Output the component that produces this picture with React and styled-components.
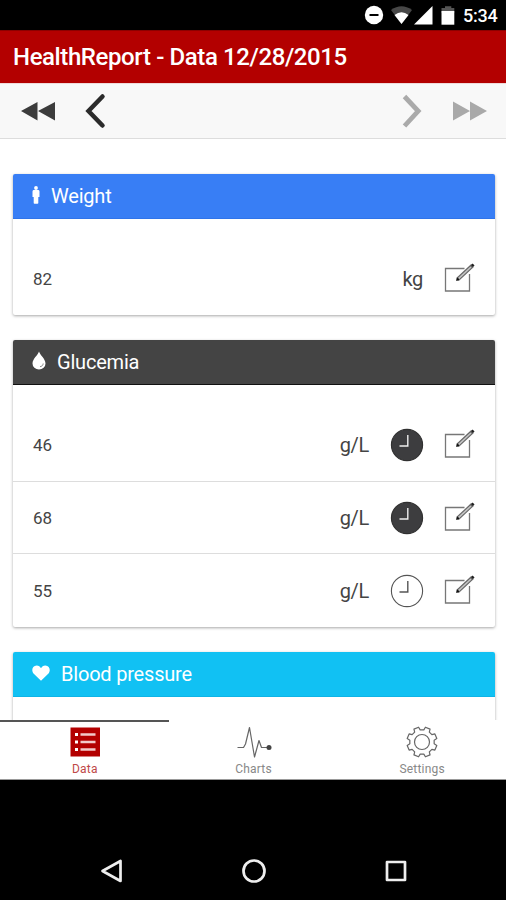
import React from 'react'
import styled, { createGlobalStyle } from 'styled-components';

const cards = [
    {
        title: 'Weight', icon: 'person', color: '#387ef5', edge: '#2f74ea', gap: 11,
        rows: [{ value: '82', unit: 'kg' }],
    },
    {
        title: 'Glucemia', icon: 'drop', color: '#444', edge: '#111', gap: 11,
        rows: [
            { value: '46', unit: 'g/L', clock: 'full' },
            { value: '68', unit: 'g/L', clock: 'full' },
            { value: '55', unit: 'g/L', clock: 'outline' },
        ],
    },
    {
        title: 'Blood pressure', icon: 'heart', color: '#11c1f3', edge: '#0eb4e6', gap: 11,
        rows: [{ value: '', unit: '' }],
    },
];

// outline of a cog with eight rounded teeth
const gearPath = () => {
    const points = [];
    for (let i = 0; i < 8; i++) {
        const mid = 22.5 + i * 45;
        [[-14, 12.3], [-9.5, 15.2], [9.5, 15.2], [14, 12.3]].forEach(([a, r]) => {
            const t = ((mid + a) * Math.PI) / 180;
            points.push(`${(16 + r * Math.cos(t)).toFixed(2)} ${(16 + r * Math.sin(t)).toFixed(2)}`);
        });
    }
    return `M${points.join('L')}Z`;
};

function EditIcon() {
    return (
        <svg width="32" height="32" viewBox="0 0 32 32" fill="none">
            <path d="M20.5 5.500H1.500V28H25.500V11" stroke="#777" strokeWidth="1.300" />
            <path d="M13.500 16.500L28.500 2.500" stroke="#666" strokeWidth="3.800" />
            <path d="M14.500 15.600L27 4" stroke="#c4c4c4" strokeWidth="1.600" />
            <path d="M12.600 17.400L13.400 15L15 16.600Z" fill="#111" stroke="#111" />
            <path d="M28 3L29.600 1.500" stroke="#222" strokeWidth="2.800" />
        </svg>
    )
}

function ClockIcon({ full }) {
    return (
        <svg width="34" height="34" viewBox="0 0 34 34" fill="none">
            <circle cx="17" cy="17" r="15.6" fill={full ? '#3d3d3f' : 'none'} stroke={full ? '#303030' : '#555'} strokeWidth="1.1" />
            <path d="M17.8 7V18H9.5" stroke={full ? '#eee' : '#555'} strokeWidth="1.4" />
        </svg>
    )
}

function TitleIcon({ name }) {
    if (name === 'person') {
        return (
            <svg width="8" height="18" viewBox="0 0 8 18" fill="#fff">
                <circle cx="4" cy="2" r="1.9" />
                <path d="M1.500 4H6.500Q7.500 4 7.500 5.500V11H6.300V17Q6.300 17.800 5.500 17.800H2.500Q1.700 17.800 1.700 17V11H0.500V5.500Q0.500 4 1.500 4Z" />
            </svg>
        )
    }
    if (name === 'drop') {
        return (
            <svg width="14" height="19" viewBox="0 0 14 19">
                <path d="M7 0.500C6 4 0.500 8 0.500 12.400A6.500 6.200 0 0 0 13.500 12.400C13.500 8 8 4 7 0.500Z" fill="#fff" />
                <path d="M11.200 12.500C11 14.400 9.800 15.500 8 15.700" stroke="#888" fill="none" />
            </svg>
        )
    }
    return (
        <svg width="18" height="16" viewBox="0 0 18 16" fill="#fff">
            <path d="M9 15.700L1.500 8.500C-0.700 6-0.100 0.600 4.700 0.500C6.700 0.500 8.200 1.700 9 3.200C9.800 1.700 11.300 0.500 13.300 0.500C18.100 0.600 18.700 6 16.500 8.500Z" />
        </svg>
    )
}

function StatusBar() {
    return (
        <Status>
            <svg width="92" height="22" viewBox="0 0 92 22">
                <circle cx="10" cy="11" r="9.200" fill="#fff" />
                <path d="M5.500 11H14.500" stroke="#000" strokeWidth="2" />
                <path d="M27 6Q37.500-1.500 48 6L37.500 20Z" fill="#474747" />
                <path d="M30.500 11Q37.500 5.600 44.500 11L37.500 20Z" fill="#fff" />
                <path d="M68.500 2V20.500H50Z" fill="#fff" />
                <path d="M77.500 4H81V2.300H87.300V4H90.300V9H77.500Z" fill="#555" />
                <path d="M77.500 7H90.300V20.700H77.500Z" fill="#fff" />
            </svg>
            <Time>5:34</Time>
        </Status>
    )
}

function App() {
    return (
        <Phone>
            <GlobalStyle />
            <StatusBar />
            <Header>
                <h1>HealthReport - Data 12/28/2015</h1>
            </Header>
            <Toolbar>
                <ToolbarSide>
                    <svg width="36" height="36" viewBox="0 0 36 36" fill="#3c3c3c">
                        <path d="M1 18L17.500 9V27.500ZM18 18L35 9V27.500Z" />
                    </svg>
                    <svg width="24" height="36" viewBox="0 0 24 36" fill="none">
                        <path d="M18.500 3.500L4.500 18L18.500 32.500" stroke="#2b2b2b" strokeWidth="4.500" strokeLinecap="round" />
                    </svg>
                </ToolbarSide>
                <ToolbarSide>
                    <svg width="24" height="36" viewBox="0 0 24 36" fill="none">
                        <path d="M4.500 3.500L18.200 18L4.500 33" stroke="#aaa" strokeWidth="4.800" />
                    </svg>
                    <svg width="36" height="36" viewBox="0 0 36 36" fill="#a9a9a9">
                        <path d="M1 8.500L18 18L1 27.500ZM18 8.500L35 18L18 27.500Z" />
                    </svg>
                </ToolbarSide>
            </Toolbar>
            <Content>
                {cards.map((card) => (
                    <Card key={card.title}>
                        <CardTitle $color={card.color} $edge={card.edge} $gap={card.gap}>
                            <TitleIcon name={card.icon} />
                            <h2>{card.title}</h2>
                        </CardTitle>
                        {card.rows.map((row, i) => (
                            <Row key={i}>
                                <Value>{row.value}</Value>
                                <Unit>{row.unit}</Unit>
                                {row.clock && <ClockIcon full={row.clock === 'full'} />}
                                <EditIcon />
                            </Row>
                        ))}
                    </Card>
                ))}
            </Content>
            <Tabs>
                <Tab $active>
                    <svg width="32" height="32" viewBox="0 0 32 32">
                        <path d="M1.500 1.500H31V30.500H1.500Z" fill="#b30000" />
                        <path d="M6 8.500H9M6 16H9M6 23.500H9" stroke="#fff" strokeWidth="3" />
                        <path d="M11.500 8.500H26.500M11.500 16H26.500M11.500 23.500H26.500" stroke="#f3c9c9" strokeWidth="2.400" />
                    </svg>
                    <span>Data</span>
                </Tab>
                <Tab>
                    <svg width="36" height="32" viewBox="0 0 36 32" fill="none">
                        <path d="M1.500 21.500H7.500L9.500 18L13.500 1.500L18.500 31L23 14.500L25.500 21.500H31" stroke="#666" strokeWidth="1.200" strokeLinejoin="round" />
                        <circle cx="33" cy="21.500" r="2.500" fill="#444" />
                    </svg>
                    <span>Charts</span>
                </Tab>
                <Tab>
                    <svg width="32" height="32" viewBox="0 0 32 32" fill="none" stroke="#666" strokeWidth="1.200" strokeLinejoin="round">
                        <path d={gearPath()} />
                        <circle cx="16" cy="16" r="7.500" />
                    </svg>
                    <span>Settings</span>
                </Tab>
            </Tabs>
            <NavBar>
                <svg width="24" height="24" viewBox="0 0 24 24">
                    <path d="M2.500 12L20.500 2V22Z" />
                </svg>
                <svg width="24" height="24" viewBox="0 0 24 24">
                    <circle cx="12" cy="12" r="10.500" />
                </svg>
                <svg width="24" height="24" viewBox="0 0 24 24">
                    <path d="M3 3H21V21H3Z" />
                </svg>
            </NavBar>
        </Phone>
    )
}

export default App

const GlobalStyle = createGlobalStyle`
* {
    box-sizing: border-box;
}
body {
    margin: 0;
    background: #000;
    font-family: Roboto, "Liberation Sans", sans-serif;
}
svg {
    display: block;
    flex-shrink: 0;
}
`;
const Phone = styled.div`
width: 506px;
height: 900px;
display: flex;
flex-direction: column;
overflow: hidden;
background: #000;
`;
const Status = styled.div`
height: 30px;
flex-shrink: 0;
display: flex;
align-items: center;
justify-content: flex-end;
padding: 0 9px 0 0;
`;
const Time = styled.span`
width: 34px;
margin-left: 7px;
padding-top: 1px;
color: #fff;
font-size: 18px;
font-weight: 500;
line-height: 22px;
letter-spacing: -0.2px;
white-space: nowrap;
`;
const Header = styled.header`
height: 53px;
flex-shrink: 0;
display: flex;
align-items: center;
padding-left: 13px;
background: #b30000;
border-top: 1px solid #8c0000;

>h1 {
    margin: 0;
    color: #fff;
    font-size: 24px;
    font-weight: 500;
    letter-spacing: -0.4px;
    white-space: nowrap;
}
`;
const Toolbar = styled.div`
height: 56px;
flex-shrink: 0;
display: flex;
align-items: center;
justify-content: space-between;
padding: 0 18px 0 20px;
background: #f8f8f8;
border-top: 1px solid #f0dada;
border-bottom: 1px solid #ddd;
`;
const ToolbarSide = styled.div`
display: flex;
gap: 28px;
`;
const Content = styled.main`
height: 581px;
flex-shrink: 0;
padding: 35px 11px 0 13px;
overflow: hidden;
background: #fff;
`;
const Card = styled.section`
margin-bottom: 25px;
border-radius: 2px;
background: #fff;
box-shadow: 0 1px 3px rgba(0, 0, 0, 0.35);
overflow: hidden;
`;
const CardTitle = styled.div`
height: 45px;
display: flex;
align-items: center;
gap: ${(props) => props.$gap}px;
padding: 0 0 3px 19px;
color: #fff;
background: ${(props) => props.$color};
border-bottom: 1px solid ${(props) => props.$edge};

>h2 {
    margin: 0;
    padding-top: 3px;
    font-size: 20px;
    font-weight: 400;
    letter-spacing: -0.2px;
}
`;
const Row = styled.div`
height: 72px;
display: flex;
align-items: center;
gap: 20px;
padding: 0 19px 0 20px;
color: #444;

&:nth-child(2) {
    height: 96px;
    padding-top: 24px;
}
&:nth-child(4) {
    height: 74px;
}
& + & {
    border-top: 1px solid #ddd;
}
`;
const Value = styled.span`
flex: 1;
font-size: 17px;
`;
const Unit = styled.span`
margin-right: 1px;
font-size: 20px;
letter-spacing: -0.3px;
`;
const Tabs = styled.nav`
height: 60px;
flex-shrink: 0;
display: flex;
background: #fff;
border-bottom: 1px solid #999;
`;
const Tab = styled.div`
flex: 1;
display: flex;
flex-direction: column;
align-items: center;
padding: ${(props) => (props.$active ? 4 : 6)}px 0 0 1px;
border-top: ${(props) => (props.$active ? '2px solid #555' : 'none')};
color: ${(props) => (props.$active ? '#c04848' : '#888')};

>span {
    margin-top: 4px;
    font-size: 12px;
    line-height: 14px;
    letter-spacing: 0.2px;
}
`;
const NavBar = styled.div`
flex: 1;
display: flex;
align-items: flex-end;
justify-content: space-between;
padding: 0 98px 17px 100px;

>svg {
    fill: none;
    stroke: #eee;
    stroke-width: 2.7px;
    stroke-linejoin: round;
}
`;
